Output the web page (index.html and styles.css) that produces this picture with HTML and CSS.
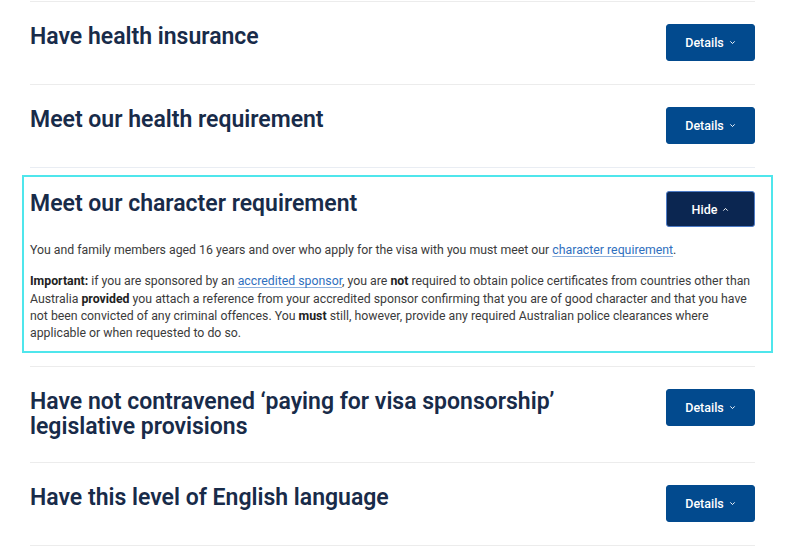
FILE: index.html
```html
<!DOCTYPE html>
<html lang="en">
<head>
<meta charset="utf-8">
<title>Visa requirements</title>
<link rel="stylesheet" href="styles.css">
</head>
<body>
<div class="list">
  <div class="item">
    <div class="row">
      <h2 class="title">Have health insurance</h2>
      <button class="btn">Details <svg class="chev" viewBox="0 0 8 5" width="7" height="5"><path d="M1.5 1.2l2.5 2.5 2.5-2.5" fill="none" stroke="currentColor" stroke-width="1.1"/></svg></button>
    </div>
  </div>
  <div class="item">
    <div class="row">
      <h2 class="title">Meet our health requirement</h2>
      <button class="btn">Details <svg class="chev" viewBox="0 0 8 5" width="7" height="5"><path d="M1.5 1.2l2.5 2.5 2.5-2.5" fill="none" stroke="currentColor" stroke-width="1.1"/></svg></button>
    </div>
  </div>
  <div class="item item-open">
    <div class="panel">
      <div class="row">
        <h2 class="title">Meet our character requirement</h2>
        <button class="btn btn-hide">Hide <svg class="chev" viewBox="0 0 8 5" width="7" height="5"><path d="M1.5 3.8l2.5-2.5 2.5 2.5" fill="none" stroke="currentColor" stroke-width="1.1"/></svg></button>
      </div>
      <p class="text first">You and family members aged 16 years and over who apply for the visa with you must meet our <a href="#">character requirement</a>.</p>
      <p class="text"><strong>Important:</strong> if you are sponsored by an <a href="#">accredited sponsor</a>, you are <strong>not</strong> required to obtain police certificates from countries other than Australia <strong>provided</strong> you attach a reference from your accredited sponsor confirming that you are of good character and that you have not been convicted of any criminal offences. You <strong>must</strong> still, however, provide any required Australian police clearances where applicable or when requested to do so.</p>
    </div>
  </div>
  <div class="item">
    <div class="row">
      <h2 class="title">Have not contravened ‘paying for visa sponsorship’ legislative provisions</h2>
      <button class="btn">Details <svg class="chev" viewBox="0 0 8 5" width="7" height="5"><path d="M1.5 1.2l2.5 2.5 2.5-2.5" fill="none" stroke="currentColor" stroke-width="1.1"/></svg></button>
    </div>
  </div>
  <div class="item">
    <div class="row">
      <h2 class="title">Have this level of English language</h2>
      <button class="btn">Details <svg class="chev" viewBox="0 0 8 5" width="7" height="5"><path d="M1.5 1.2l2.5 2.5 2.5-2.5" fill="none" stroke="currentColor" stroke-width="1.1"/></svg></button>
    </div>
  </div>
</div>
</body>
</html>
```
FILE: styles.css
```css
* { box-sizing: border-box; }
html, body { margin: 0; padding: 0; background: #fff; }
body { font-family: Roboto, "Liberation Sans", sans-serif; }

.list {
  width: 725px;
  margin: 1px 0 0 30px;
}

.item {
  border-top: 1px solid #ececec;
  padding: 22px 0 23px;
}
.item:last-child { border-bottom: 1px solid #ececec; }

.item-open {
  padding: 7px 0 13px;
  border-top-color: #e9edf3;
}

.panel {
  margin: 0 -18px 0 -8px;
  border: 2px solid #4fe6ec;
  padding: 14px 16px 9px 6px;
}

.row {
  display: flex;
  align-items: flex-start;
  justify-content: space-between;
  gap: 36px;
}

.title {
  margin: 0;
  font-size: 23px;
  line-height: 25px;
  font-weight: 600;
  color: #182b49;
  max-width: 600px;
}

.btn {
  flex: none;
  width: 89px;
  height: 37px;
  border: 1px solid #024a8e;
  border-radius: 3px;
  background: #024a8e;
  color: #fff;
  font-family: Roboto, "Liberation Sans", sans-serif;
  font-size: 12.5px;
  font-weight: 500;
  display: flex;
  align-items: center;
  justify-content: center;
  gap: 5px;
  padding: 0;
}
.btn-hide {
  background: #0b2651;
  border-color: #4d7bc6;
  height: 36px;
}
.chev { display: block; }

.text {
  margin: 14px -8px 0 0;
  font-size: 12.3px;
  line-height: 17.3px;
  color: #3b3b3b;
}
.text.first { margin-top: 15px; }
.text strong { font-weight: 700; color: #222; }
.text a {
  color: #2f6fbe;
  text-decoration: underline;
  text-decoration-color: #8fb1dc;
  text-underline-offset: 2px;
}
```
